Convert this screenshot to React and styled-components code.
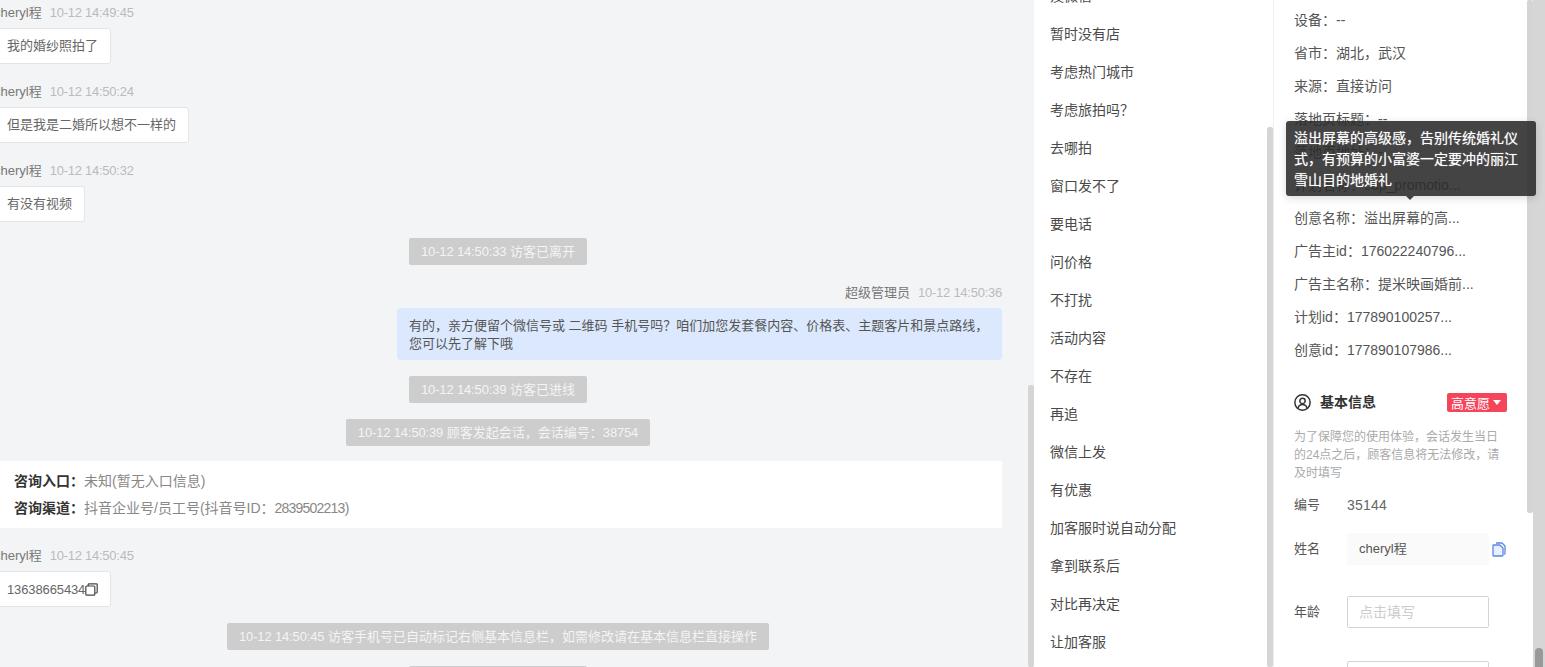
import React from "react";
import styled, { createGlobalStyle } from "styled-components";

const GlobalStyle = createGlobalStyle`
  html, body {
    margin: 0;
    padding: 0;
    height: 100%;
    overflow: hidden;
    font-family: "Liberation Sans", "Noto Sans CJK SC", sans-serif;
    font-size: 13px;
  }
`;

const Page = styled.div`
  position: relative;
  display: flex;
  height: 100vh;
  overflow: hidden;
  background: #d6d6d6;
`;

const ChatPane = styled.section`
  position: relative;
  flex: 0 0 1034px;
  overflow: hidden;
  background: #f3f4f6;
`;

const Thread = styled.div`
  display: flex;
  flex-direction: column;
  width: 1008px;
  margin: -15px 0 0 -6px;
`;

const Message = styled.div`
  display: flex;
  flex-direction: column;
  align-items: ${(p) => (p.$mine ? "flex-end" : "flex-start")};
  margin-top: 17px;
`;

const Meta = styled.div`
  display: flex;
  gap: 8px;
  height: 20px;
  margin-bottom: 6px;
  line-height: 22px;
  color: #777;
`;

const Time = styled.span`
  color: #bbb;
  letter-spacing: -0.25px;
`;

const Bubble = styled.div`
  display: flex;
  align-items: center;
  box-sizing: border-box;
  height: 36px;
  padding: 0 12px ${(p) => (p.$digits ? 0 : 4)}px;
  border: 1px solid #e4e4e4;
  border-radius: 3px;
  background: #fff;
  color: #666;
  letter-spacing: ${(p) => (p.$digits ? "-0.12px" : "0")};
  white-space: nowrap;
`;

const MineBubble = styled.div`
  box-sizing: border-box;
  width: 605px;
  height: 52px;
  padding: 9px 12px 0;
  border-radius: 4px;
  background: #dbe8fd;
  color: #555;
  line-height: 18px;
  white-space: nowrap;
`;

const Notice = styled.div`
  align-self: center;
  height: 27px;
  margin-top: 16px;
  padding: 0 12px;
  border-radius: 2px;
  background: #cdcdcd;
  color: #f4f4f4;
  line-height: 27px;
  white-space: nowrap;
`;

const NoticeDigits = styled.span`
  letter-spacing: -0.15px;
`;

const InfoCard = styled.div`
  box-sizing: border-box;
  height: 67px;
  margin-top: 15px;
  padding: 7px 20px;
  background: #fff;
  color: #888;
  font-size: 14px;
  line-height: 27px;
`;

const InfoLabel = styled.b`
  color: #333;
`;

const InfoDigits = styled.span`
  letter-spacing: -0.78px;
`;

const Thumb = styled.i`
  position: absolute;
  top: ${(p) => p.$top}px;
  right: 0;
  bottom: ${(p) => p.$bottom || 0}px;
  width: 6px;
  border-radius: 2px;
  background: #d5d5d5;
`;

const ListPane = styled.section`
  position: relative;
  flex: 0 0 239px;
  overflow: hidden;
  border-right: 1px solid #eee;
  background: #fff;
`;

const ReplyList = styled.ul`
  margin: -23px 0 0;
  padding: 0 0 0 16px;
  list-style: none;
`;

const Reply = styled.li`
  height: 38px;
  color: #4a4a4a;
  font-size: 14px;
  line-height: 38px;
`;

const DetailPane = styled.section`
  position: relative;
  flex: 0 0 259px;
  box-sizing: border-box;
  padding: 4px 0 0 20px;
  overflow: hidden;
  background: #fff;
`;

const DetailRow = styled.div`
  height: 33px;
  color: #555;
  font-size: 14px;
  line-height: 33px;
  white-space: nowrap;
`;

const SectionHead = styled.header`
  display: flex;
  align-items: center;
  width: 213px;
  height: 20px;
  margin-top: 25px;
  color: #333;
`;

const SectionTitle = styled.h3`
  flex: 1;
  margin: 0 0 2px 9px;
  font-size: 14px;
  font-weight: 700;
`;

const IntentBadge = styled.span`
  display: flex;
  align-items: center;
  gap: 3px;
  box-sizing: border-box;
  width: 60px;
  height: 19px;
  padding-left: 4px;
  border-radius: 2px;
  background: #f5455a;
  color: #fff;
`;

const Caret = styled.i`
  width: 0;
  height: 0;
  border: 4px solid transparent;
  border-top: 5px solid #fff;
  border-bottom: 0;
`;

const Hint = styled.p`
  margin: 16px 0 13px;
  color: #aaa;
  font-size: 12px;
  line-height: 18px;
  white-space: nowrap;
`;

const Field = styled.div`
  display: flex;
  align-items: center;
  margin-bottom: ${(p) => p.$after}px;
  color: #555;
`;

const FieldLabel = styled.span`
  flex: 0 0 53px;
  height: 20px;
  line-height: 20px;
`;

const NumberValue = styled.span`
  height: 20px;
  color: #666;
  font-size: 14px;
  letter-spacing: 0.2px;
  line-height: 20px;
`;

const FilledValue = styled.div`
  box-sizing: border-box;
  width: 142px;
  height: 32px;
  margin-right: 3px;
  padding-left: 12px;
  border-radius: 2px;
  background: #fafafa;
  color: #555;
  line-height: 32px;
`;

const EmptyInput = styled.input`
  box-sizing: border-box;
  width: 142px;
  height: 32px;
  padding: 0 11px 1px;
  border: 1px solid #d4d4d4;
  border-radius: 2px;
  background: #fff;
  font: inherit;
  font-size: 14px;
  outline: none;

  &::placeholder {
    color: #ccc;
    opacity: 1;
  }
`;

const Rail = styled.div`
  display: flex;
  flex: 1;
  align-items: flex-end;
  justify-content: center;
`;

const RailThumb = styled.i`
  width: 8px;
  height: 19px;
  border-radius: 4px 4px 0 0;
  background: #999;
`;

const Tooltip = styled.div`
  position: absolute;
  top: 121px;
  left: 1286px;
  box-sizing: border-box;
  width: 250px;
  height: 75px;
  padding: 7px 8px 0;
  border-radius: 3px;
  background: rgba(42, 42, 42, 0.88);
  box-shadow: 0 2px 8px rgba(0, 0, 0, 0.15);
  color: #fff;
  font-size: 14px;
  line-height: 21px;
  text-shadow: 0 0 1px rgba(255, 255, 255, 0.6);
  white-space: nowrap;

  &::after {
    content: "";
    position: absolute;
    bottom: -4px;
    left: 120px;
    border: 4px solid transparent;
    border-top: 4px solid rgba(42, 42, 42, 0.88);
    border-bottom: 0;
  }
`;

const CopyIcon = () => (
  <svg width="13" height="13" viewBox="0 0 13 13" fill="none" stroke="#444" strokeWidth="1.2">
    <rect x="0.8" y="3" width="9" height="9.2" rx="1" />
    <path d="M3.2 3V1.6c0-.5.3-.8.8-.8h7.4c.5 0 .8.3.8.8v7.6c0 .5-.3.8-.8.8H9.8" />
  </svg>
);

const DocCopyIcon = () => (
  <svg width="14" height="15" viewBox="0 0 14 15" fill="none" stroke="#5b86e5" strokeWidth="1.3">
    <path d="M4 1h6l3 3v7.5c0 .5-.3.8-.8.8" />
    <path d="M1.6 3h6.2L11 6v7.2c0 .5-.3.8-.8.8H1.6c-.4 0-.6-.3-.6-.7V3.6c0-.3.2-.6.6-.6z" fill="#e8efff" />
  </svg>
);

const UserCircleIcon = () => (
  <svg width="17" height="17" viewBox="0 0 24 24" fill="none" stroke="#333" strokeWidth="2.1" strokeLinecap="round">
    <circle cx="12" cy="12" r="10.8" />
    <circle cx="12" cy="9.8" r="3.8" />
    <path d="M18.2 19.8a6.4 6.4 0 0 0-12.4 0" />
  </svg>
);

const replies = [
  "没微信", "暂时没有店", "考虑热门城市", "考虑旅拍吗？", "去哪拍", "窗口发不了",
  "要电话", "问价格", "不打扰", "活动内容", "不存在", "再追", "微信上发", "有优惠",
  "加客服时说自动分配", "拿到联系后", "对比再决定", "让加客服",
];

const details = [
  "设备：--",
  "省市：湖北，武汉",
  "来源：直接访问",
  "落地页标题：--",
  "落地页地址：--",
  "计划名称：cdp_promotio...",
  "创意名称：溢出屏幕的高...",
  "广告主id：176022240796...",
  "广告主名称：提米映画婚前...",
  "计划id：177890100257...",
  "创意id：177890107986...",
];

const Visitor = ({ time, digits, children }) => (
  <Message>
    <Meta>
      <span>cheryl程</span>
      <Time>{time}</Time>
    </Meta>
    <Bubble $digits={digits}>{children}</Bubble>
  </Message>
);

const App = () => {
  return (
    <Page>
      <GlobalStyle />
      <ChatPane>
        <Thread>
          <Visitor time="10-12 14:49:45">我的婚纱照拍了</Visitor>
          <Visitor time="10-12 14:50:24">但是我是二婚所以想不一样的</Visitor>
          <Visitor time="10-12 14:50:32">有没有视频</Visitor>
          <Notice>
            <NoticeDigits>10-12 14:50:33</NoticeDigits> 访客已离开
          </Notice>
          <Message $mine>
            <Meta>
              <span>超级管理员</span>
              <Time>10-12 14:50:36</Time>
            </Meta>
            <MineBubble>
              有的，亲方便留个微信号或 二维码 手机号吗？咱们加您发套餐内容、价格表、主题客片和景点路线，
              <br />
              您可以先了解下哦
            </MineBubble>
          </Message>
          <Notice>
            <NoticeDigits>10-12 14:50:39</NoticeDigits> 访客已进线
          </Notice>
          <Notice>
            <NoticeDigits>10-12 14:50:39</NoticeDigits> 顾客发起会话，会话编号：
            <NoticeDigits>38754</NoticeDigits>
          </Notice>
          <InfoCard>
            <div>
              <InfoLabel>咨询入口：</InfoLabel>未知(暂无入口信息)
            </div>
            <div>
              <InfoLabel>咨询渠道：</InfoLabel>抖音企业号/员工号(抖音号ID：
              <InfoDigits>2839502213</InfoDigits>)
            </div>
          </InfoCard>
          <Visitor time="10-12 14:50:45" digits>
            13638665434
            <CopyIcon />
          </Visitor>
          <Notice>
            <NoticeDigits>10-12 14:50:45</NoticeDigits> 访客手机号已自动标记右侧基本信息栏，如需修改请在基本信息栏直接操作
          </Notice>
          <Notice>
            <NoticeDigits>10-12 14:50:46</NoticeDigits> 访客已离开
          </Notice>
        </Thread>
        <Thumb $top={385} />
      </ChatPane>

      <ListPane>
        <ReplyList>
          {replies.map((text) => (
            <Reply key={text}>{text}</Reply>
          ))}
        </ReplyList>
        <Thumb $top={127} />
      </ListPane>

      <DetailPane>
        {details.map((text) => (
          <DetailRow key={text}>{text}</DetailRow>
        ))}
        <SectionHead>
          <UserCircleIcon />
          <SectionTitle>基本信息</SectionTitle>
          <IntentBadge>
            高意愿
            <Caret />
          </IntentBadge>
        </SectionHead>
        <Hint>
          为了保障您的使用体验，会话发生当日
          <br />
          的24点之后，顾客信息将无法修改，请
          <br />
          及时填写
        </Hint>
        <Field $after={18}>
          <FieldLabel>编号</FieldLabel>
          <NumberValue>35144</NumberValue>
        </Field>
        <Field $after={31}>
          <FieldLabel>姓名</FieldLabel>
          <FilledValue>cheryl程</FilledValue>
          <DocCopyIcon />
        </Field>
        <Field $after={33}>
          <FieldLabel>年龄</FieldLabel>
          <EmptyInput placeholder="点击填写" />
        </Field>
        <Field $after={0}>
          <FieldLabel>微信</FieldLabel>
          <EmptyInput placeholder="点击填写" />
        </Field>
        <Thumb $top={0} $bottom={154} />
      </DetailPane>

      <Rail>
        <RailThumb />
      </Rail>

      <Tooltip>
        溢出屏幕的高级感，告别传统婚礼仪
        <br />
        式，有预算的小富婆一定要冲的丽江
        <br />
        雪山目的地婚礼
      </Tooltip>
    </Page>
  );
};

export default App;
